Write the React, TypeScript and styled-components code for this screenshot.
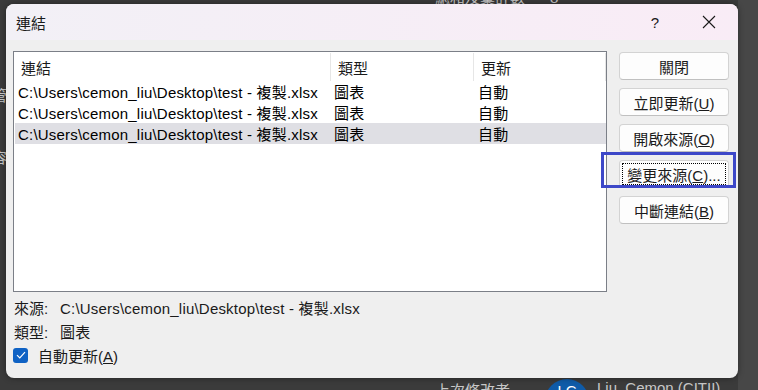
import React from 'react';
import styled, { createGlobalStyle } from 'styled-components';

const FONT = `"Liberation Sans", "Noto Sans CJK TC", sans-serif`;

interface ILink {
    source: string;
    kind: string;
    update: string;
}

const links: ILink[] = [
    { source: 'C:\\Users\\cemon_liu\\Desktop\\test - 複製.xlsx', kind: '圖表', update: '自動' },
    { source: 'C:\\Users\\cemon_liu\\Desktop\\test - 複製.xlsx', kind: '圖表', update: '自動' },
    { source: 'C:\\Users\\cemon_liu\\Desktop\\test - 複製.xlsx', kind: '圖表', update: '自動' },
];

const GlobalStyle = createGlobalStyle`
    body {
        margin: 0;
        font-family: ${FONT};
        background: #3c3c3c;
    }
`;

const Desktop = styled.div`
    position: relative;
    width: 758px;
    height: 390px;
    overflow: hidden;
    box-sizing: border-box;
    padding: 4px 0 0 6px;
    background: linear-gradient(to right, #3b3b3b 738px, #474747 738px);
`;

const BackdropText = styled.span<{ x: number; y: number }>`
    position: absolute;
    left: ${(p) => p.x}px;
    top: ${(p) => p.y}px;
    font-size: 15px;
    color: #c8c8c8;
    white-space: nowrap;
`;

const Avatar = styled.div`
    position: absolute;
    left: 545px;
    top: 379px;
    width: 44px;
    height: 44px;
    border-radius: 50%;
    background: #0f5ba8;
    color: #fff;
    font-size: 15px;
    display: flex;
    justify-content: center;
    padding-top: 3px;
    box-sizing: border-box;
`;

const Dialog = styled.div`
    position: relative;
    width: 732px;
    height: 374px;
    border-radius: 8px;
    background: #efefef;
    overflow: hidden;
    display: flex;
    flex-direction: column;
    box-shadow: 0 0 6px rgba(0, 0, 0, 0.4);
`;

const TitleBar = styled.div`
    height: 36px;
    flex-shrink: 0;
    display: flex;
    align-items: center;
    padding-left: 10px;
    background: linear-gradient(to right, #f2f0f6, #f9ecf6);
    color: #1a1a1a;
    font-size: 15px;
`;

const Title = styled.span`
    flex: 1;
`;

const TitleButton = styled.div<{ w: number }>`
    width: ${(p) => p.w}px;
    height: 36px;
    display: flex;
    align-items: center;
    justify-content: center;
    font-size: 15px;
    color: #1a1a1a;
`;

const Body = styled.div`
    flex: 1;
    display: flex;
    gap: 12px;
    padding: 11px 0 0 7px;
`;

const Main = styled.div`
    display: flex;
    flex-direction: column;
`;

const ListBox = styled.div`
    width: 594px;
    height: 241px;
    box-sizing: border-box;
    border: 1px solid #7b7f87;
    background: #fff;
    padding: 1px 0 0 0;
`;

const Row = styled.div<{ header?: boolean; selected?: boolean }>`
    display: grid;
    grid-template-columns: 316px 143px 132px;
    height: ${(p) => (p.header ? 28 : 21)}px;
    align-items: center;
    font-size: 15px;
    letter-spacing: 0.2px;
    color: #000;
    margin-left: ${(p) => (p.selected ? 1 : 0)}px;
    padding-left: ${(p) => (p.selected ? 0 : 1)}px;
    width: 591px;
    background: ${(p) => (p.selected ? '#dfdfe4' : 'transparent')};
`;

const HeaderCell = styled.div<{ pad: number }>`
    height: 28px;
    display: flex;
    align-items: center;
    padding-left: ${(p) => p.pad}px;
    border-right: 1px solid #e6e6e6;
    box-sizing: border-box;
    color: #1a1a1a;
    letter-spacing: 0;
`;

const Cell = styled.div<{ pad: number }>`
    padding-left: ${(p) => p.pad}px;
    white-space: nowrap;
    overflow: hidden;
`;

const Info = styled.div`
    display: flex;
    align-items: center;
    height: 24px;
    font-size: 15px;
    letter-spacing: 0.2px;
    color: #1a1a1a;
    padding-left: 1px;
`;

const InfoLabel = styled.span`
    width: 46px;
    letter-spacing: 0;
`;

const CheckRow = styled.label`
    display: flex;
    align-items: center;
    gap: 10px;
    height: 24px;
    font-size: 15px;
    color: #1a1a1a;
`;

const CheckBox = styled.span`
    width: 15px;
    height: 15px;
    border-radius: 3px;
    background: #0f62c4;
    display: flex;
    align-items: center;
    justify-content: center;
`;

const Buttons = styled.div`
    display: flex;
    flex-direction: column;
    gap: 8px;
    padding-top: 1px;
`;

const ButtonSlot = styled.div`
    position: relative;
`;

const Button = styled.button<{ focused?: boolean }>`
    width: 110px;
    height: 28px;
    box-sizing: border-box;
    border: 1px solid #d3d3d3;
    border-bottom-color: #c0c0c0;
    border-radius: 4px;
    background: #fdfdfd;
    font-family: ${FONT};
    font-size: 15px;
    color: #1a1a1a;
    padding: 0;
    outline: ${(p) => (p.focused ? '1px dotted #000' : 'none')};
    outline-offset: -4px;
`;

const Highlight = styled.div`
    position: absolute;
    left: -18px;
    top: -8px;
    width: 135px;
    height: 36px;
    box-sizing: border-box;
    border: 3px solid #3d48c8;
    pointer-events: none;
`;

const Key: React.FC<{ k: string }> = ({ k }) => <u>{k}</u>;

const App: React.FC = () => (
    <>
        <GlobalStyle />
        <Desktop>
            <BackdropText x={435} y={-14}>總和及彙計數&nbsp;&nbsp;&nbsp;&nbsp;&nbsp;&nbsp;8</BackdropText>
            <BackdropText x={-8} y={84}>管</BackdropText>
            <BackdropText x={-8} y={146}>容</BackdropText>
            <BackdropText x={435} y={379}>上次修改者</BackdropText>
            <Avatar>LC</Avatar>
            <BackdropText x={597} y={379}>Liu, Cemon (CITII)</BackdropText>
            <Dialog>
                <TitleBar>
                    <Title>連結</Title>
                    <TitleButton w={50}>?</TitleButton>
                    <TitleButton w={58}>
                        <svg width="14" height="14" viewBox="0 0 14 14">
                            <path d="M1 1 L13 13 M13 1 L1 13" stroke="#1a1a1a" strokeWidth="1.1" />
                        </svg>
                    </TitleButton>
                </TitleBar>
                <Body>
                    <Main>
                        <ListBox>
                            <Row header>
                                <HeaderCell pad={6}>連結</HeaderCell>
                                <HeaderCell pad={7}>類型</HeaderCell>
                                <HeaderCell pad={7}>更新</HeaderCell>
                            </Row>
                            {links.map((link, i) => (
                                <Row key={i} selected={i === links.length - 1}>
                                    <Cell pad={3}>{link.source}</Cell>
                                    <Cell pad={3}>{link.kind}</Cell>
                                    <Cell pad={4}>{link.update}</Cell>
                                </Row>
                            ))}
                        </ListBox>
                        <Info style={{ marginTop: 3 }}>
                            <InfoLabel>來源:</InfoLabel>
                            {links[2].source}
                        </Info>
                        <Info>
                            <InfoLabel>類型:</InfoLabel>
                            圖表
                        </Info>
                        <CheckRow>
                            <CheckBox>
                                <svg width="10" height="8" viewBox="0 0 10 8">
                                    <path d="M1 4.2 L3.8 7 L9 1.2" fill="none" stroke="#fff" strokeWidth="1.2" />
                                </svg>
                            </CheckBox>
                            <span>
                                自動更新(<Key k="A" />)
                            </span>
                        </CheckRow>
                    </Main>
                    <Buttons>
                        <Button>關閉</Button>
                        <Button>
                            立即更新(<Key k="U" />)
                        </Button>
                        <Button>
                            開啟來源(<Key k="O" />)
                        </Button>
                        <ButtonSlot>
                            <Button focused>
                                變更來源(<Key k="C" />)...
                            </Button>
                            <Highlight />
                        </ButtonSlot>
                        <Button>
                            中斷連結(<Key k="B" />)
                        </Button>
                    </Buttons>
                </Body>
            </Dialog>
        </Desktop>
    </>
);

export default App;
